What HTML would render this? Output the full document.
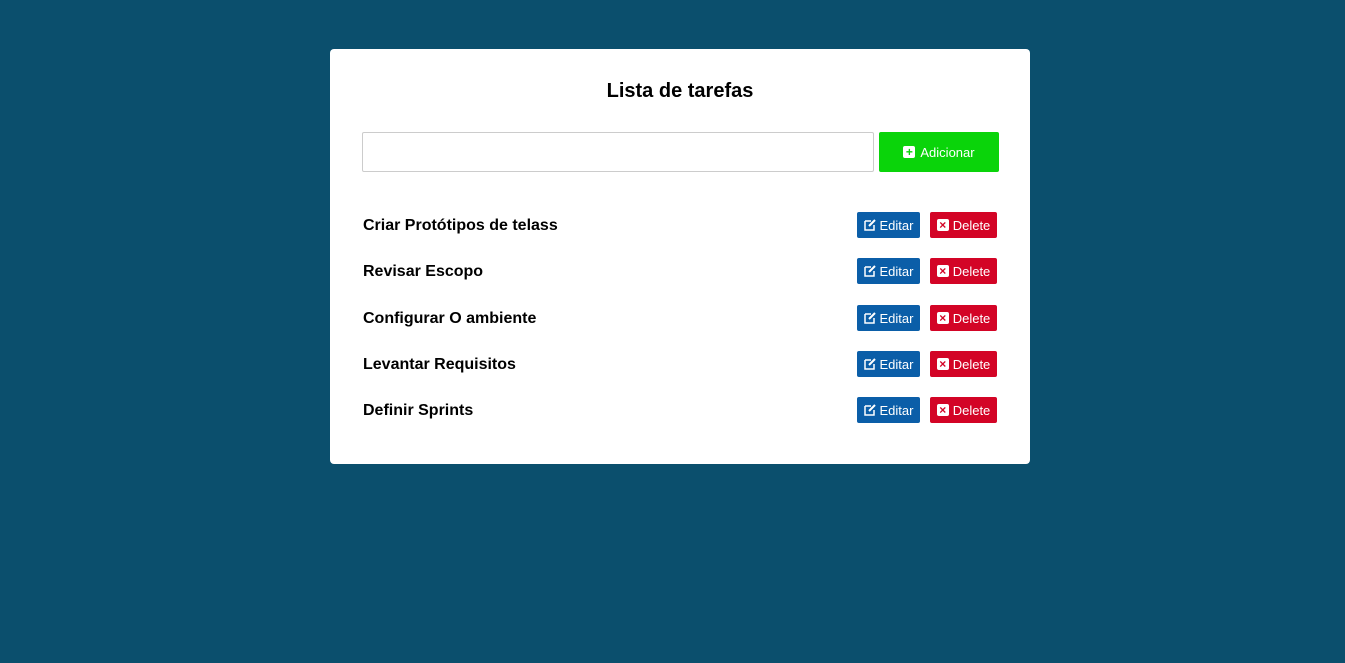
<!DOCTYPE html><html><head><style>
body{margin:0;background:#0b4f6d;font-family:"Liberation Sans",sans-serif;width:1345px;height:663px;overflow:hidden}
.card{position:absolute;left:330px;top:49px;width:700px;height:415px;background:#fff;border-radius:4px}
h1{position:absolute;top:80px;left:330px;width:700px;text-align:center;margin:0;font-size:20px;font-weight:bold;line-height:22px}
.inp{position:absolute;left:362px;top:132px;width:510px;height:38px;border:1px solid #ccc;border-radius:2px}
.add{position:absolute;left:879px;top:132px;width:120px;height:40px;background:#0ad40a;border-radius:2px;color:#fff;font-size:13px;display:flex;align-items:center;justify-content:center;gap:5px}
.row{position:absolute;left:363px;width:635px;height:26px}
.row .t{position:absolute;left:0;top:5px;font-size:16px;font-weight:bold}
.b{position:absolute;top:0;height:26px;border-radius:2px;color:#fff;font-size:13px;display:flex;align-items:center;justify-content:center;gap:4px}
.e{left:494px;width:63px;background:#0b5ea8}.d{left:567px;width:67px;background:#d30426}
.ic{display:inline-block;width:12px;height:12px;background:#fff;border-radius:2px;font-size:12px;line-height:12px;text-align:center;font-weight:bold;font-style:normal}
</style></head><body>
<div class="card"></div><h1>Lista de tarefas</h1>
<div class="inp"></div>
<div class="add"><i class="ic" style="color:#0ad40a">+</i>Adicionar</div>
<div class="row" style="top:212px"><span class="t">Criar Protótipos de telass</span><div class="b e"><svg width="12" height="12" viewBox="0 0 12 12"><path d="M1 2h6M1 2v9h9V6" stroke="#fff" stroke-width="1.5" fill="none"/><path d="M5 7l6-6" stroke="#fff" stroke-width="2"/></svg>Editar</div><div class="b d"><i class="ic" style="color:#d30426">×</i>Delete</div></div>
<div class="row" style="top:258px"><span class="t">Revisar Escopo</span><div class="b e"><svg width="12" height="12" viewBox="0 0 12 12"><path d="M1 2h6M1 2v9h9V6" stroke="#fff" stroke-width="1.5" fill="none"/><path d="M5 7l6-6" stroke="#fff" stroke-width="2"/></svg>Editar</div><div class="b d"><i class="ic" style="color:#d30426">×</i>Delete</div></div>
<div class="row" style="top:305px"><span class="t">Configurar O ambiente</span><div class="b e"><svg width="12" height="12" viewBox="0 0 12 12"><path d="M1 2h6M1 2v9h9V6" stroke="#fff" stroke-width="1.5" fill="none"/><path d="M5 7l6-6" stroke="#fff" stroke-width="2"/></svg>Editar</div><div class="b d"><i class="ic" style="color:#d30426">×</i>Delete</div></div>
<div class="row" style="top:351px"><span class="t">Levantar Requisitos</span><div class="b e"><svg width="12" height="12" viewBox="0 0 12 12"><path d="M1 2h6M1 2v9h9V6" stroke="#fff" stroke-width="1.5" fill="none"/><path d="M5 7l6-6" stroke="#fff" stroke-width="2"/></svg>Editar</div><div class="b d"><i class="ic" style="color:#d30426">×</i>Delete</div></div>
<div class="row" style="top:397px"><span class="t">Definir Sprints</span><div class="b e"><svg width="12" height="12" viewBox="0 0 12 12"><path d="M1 2h6M1 2v9h9V6" stroke="#fff" stroke-width="1.5" fill="none"/><path d="M5 7l6-6" stroke="#fff" stroke-width="2"/></svg>Editar</div><div class="b d"><i class="ic" style="color:#d30426">×</i>Delete</div></div>
</body></html>
